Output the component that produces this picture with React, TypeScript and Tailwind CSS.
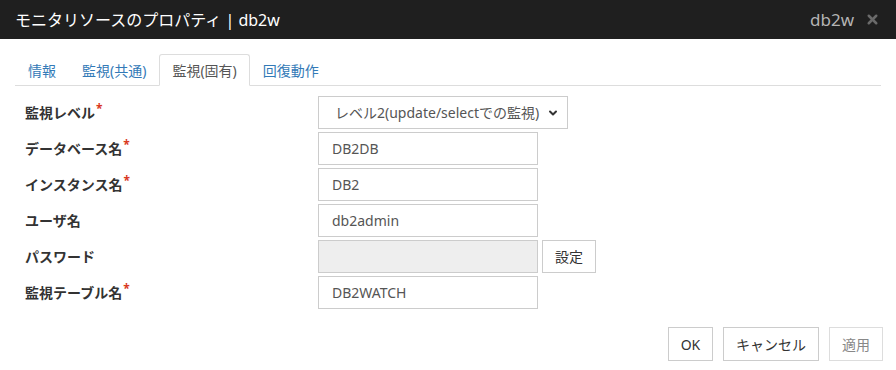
import { ChevronDown, X } from "lucide-react";

const font = { fontFamily: '"Noto Sans", "Noto Sans CJK JP", sans-serif' };

const tabs = ["情報", "監視(共通)", "監視(固有)", "回復動作"];

type Row = {
  label: string;
  required?: boolean;
  value?: string;
  kind: "select" | "text" | "password";
};

const rows: Row[] = [
  { label: "監視レベル", required: true, value: "レベル2(update/selectでの監視)", kind: "select" },
  { label: "データベース名", required: true, value: "DB2DB", kind: "text" },
  { label: "インスタンス名", required: true, value: "DB2", kind: "text" },
  { label: "ユーザ名", value: "db2admin", kind: "text" },
  { label: "パスワード", kind: "password" },
  { label: "監視テーブル名", required: true, value: "DB2WATCH", kind: "text" }
];

export default function App() {
  return (
    <div className="h-[370px] w-[896px] overflow-hidden bg-white text-[#333]" style={font}>
      <div className="flex h-[39px] items-center justify-between bg-[#1f1f1f] pl-[15px] pr-[16px]">
        <h1 className="text-[16px] leading-none text-white">モニタリソースのプロパティ | db2w</h1>
        <div className="flex items-center gap-[11px]">
          <span className="text-[17px] leading-none text-[#b4b4b4]">db2w</span>
          <X className="h-[15px] w-[15px] text-[#6a6a6a]" strokeWidth={4} />
        </div>
      </div>

      <div className="mx-[15px] mt-[15px] flex h-[32px] items-end border-b border-[#ddd]">
        {tabs.map((tab) => {
          const isActive = tab === "監視(固有)";
          return (
            <div
              key={tab}
              className={`-mb-px flex h-[32px] items-center rounded-t-[3px] border px-[12px] text-[14px] ${
                isActive
                  ? "border-[#ddd] border-b-white bg-white text-[#555]"
                  : "border-transparent text-[#337ab7]"
              }`}
            >
              {tab}
            </div>
          );
        })}
      </div>

      <div className="mt-[10px] flex flex-col gap-[3px] pl-[25px]">
        {rows.map((row) => (
          <div key={row.label} className="flex h-[33px] items-center">
            <div className="w-[293px] text-[14px] font-bold text-[#333]">
              {row.label}
              {row.required && <span className="relative -top-[5px] ml-[1px] text-[12px] text-[#d9381e]">*</span>}
            </div>
            {row.kind === "select" && (
              <div className="flex h-[33px] w-[250px] items-center justify-between border border-[#ccc] pl-[16px] pr-[8px] text-[14px] text-[#555]">
                <span>{row.value}</span>
                <ChevronDown className="h-[12px] w-[12px] text-[#333]" strokeWidth={4} />
              </div>
            )}
            {row.kind === "text" && (
              <div className="flex h-[33px] w-[220px] items-center border border-[#ccc] px-[13px] text-[14px] text-[#555]">
                {row.value}
              </div>
            )}
            {row.kind === "password" && (
              <div className="flex items-center gap-[4px]">
                <div className="h-[33px] w-[220px] border border-[#ccc] bg-[#eee]" />
                <button
                  type="button"
                  className="flex h-[33px] w-[54px] items-center justify-center border border-[#ccc] bg-white text-[14px] text-[#333]"
                >
                  設定
                </button>
              </div>
            )}
          </div>
        ))}
      </div>

      <div className="mt-[18px] flex justify-end gap-[10px] pr-[13px]">
        <button type="button" className="h-[34px] w-[45px] border border-[#ccc] bg-white text-[14px] text-[#333]">
          OK
        </button>
        <button type="button" className="h-[34px] w-[96px] border border-[#ccc] bg-white text-[14px] text-[#333]">
          キャンセル
        </button>
        <button type="button" className="h-[34px] w-[54px] border border-[#ddd] bg-white text-[14px] text-[#888]">
          適用
        </button>
      </div>
    </div>
  );
}
